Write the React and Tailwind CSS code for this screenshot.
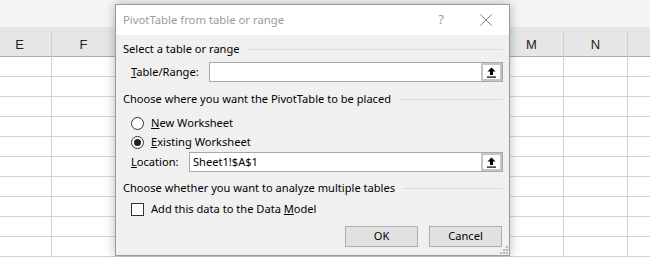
import React from "react";

const cols = ["E", "F", "", "", "", "", "", "", "M", "N", ""];

function UpBtn() {
  return (
    <div className="w-[21px] h-[18px] border-2 border-[#c4c4c4] bg-white flex items-center justify-center shrink-0">
      <svg width="9" height="11" viewBox="0 0 9 11">
        <path d="M4.5 0.5 L8.5 4.5 L6 4.5 L6 8 L3 8 L3 4.5 L0.5 4.5 Z" fill="#000" />
        <rect x="0" y="9.5" width="9" height="1.2" fill="#000" />
      </svg>
    </div>
  );
}

function Heading({ children }) {
  return (
    <div className="flex items-center h-[16px] gap-[8px]">
      <span className="whitespace-nowrap">{children}</span>
      <div className="flex-1 h-px bg-[#dcdcdc]" />
    </div>
  );
}

function Radio({ checked }) {
  return (
    <div className="w-[13px] h-[13px] rounded-full border border-[#333] bg-white flex items-center justify-center shrink-0">
      {checked && <div className="w-[7px] h-[7px] rounded-full bg-[#222]" />}
    </div>
  );
}

export default function App() {
  return (
    <div
      className="relative w-[650px] h-[257px] overflow-hidden bg-white"
      style={{ fontFamily: '"Noto Sans", "Open Sans", sans-serif' }}
    >
      {/* spreadsheet */}
      <div className="h-[27px] bg-[#f5f5f5]" />
      <div className="flex ml-[-12px] h-[30px] bg-[#e6e6e6] border-b border-[#ababab]">
        {cols.map((c, i) => (
          <div
            key={i}
            className="w-[64px] shrink-0 border-r border-[#cfcfcf] flex items-center justify-center text-[13px] text-[#222] mt-[5px] h-[25px]"
            style={{ fontFamily: '"Liberation Sans", Arial, sans-serif' }}
          >
            {c}
          </div>
        ))}
      </div>
      {Array.from({ length: 10 }).map((_, r) => (
        <div key={r} className="flex ml-[-12px] h-[20px] border-b border-[#d4d4d4]">
          {cols.map((c, i) => (
            <div key={i} className="w-[64px] shrink-0 border-r border-[#d4d4d4]" />
          ))}
        </div>
      ))}

      {/* dialog */}
      <div className="absolute left-[115px] top-[4px] w-[395px] h-[252px] border border-[#9a9a9a] bg-[#f0f0f0] shadow-[0_0_10px_rgba(0,0,0,0.28)] text-[11.1px] text-black flex flex-col">
        <div className="h-[30px] bg-white flex items-center pl-[7px] shrink-0">
          <span className="text-[#9b9b9b] text-[11.3px] flex-1">PivotTable from table or range</span>
          <span className="text-[#9a9a9a] text-[13px] mr-[36px]">?</span>
          <svg width="12" height="12" viewBox="0 0 12 12" className="mr-[17px]">
            <path d="M0.5 0.5 L11.5 11.5 M11.5 0.5 L0.5 11.5" stroke="#808080" strokeWidth="1" />
          </svg>
        </div>

        <div className="flex flex-col pl-[7px] pr-[6px]">
          <div className="mt-[6px]">
            <Heading>Select a table or range</Heading>
          </div>
          <div className="mt-[5px] flex items-center h-[20px]">
            <span className="ml-[8px] w-[78px]">
              <span className="underline">T</span>able/Range:
            </span>
            <div className="flex-1 h-[20px] bg-white border border-[#a8a8a8] flex items-center justify-end">
              <UpBtn />
            </div>
          </div>

          <div className="mt-[9px]">
            <Heading>Choose where you want the PivotTable to be placed</Heading>
          </div>
          <div className="mt-[8px] flex items-center h-[16px] ml-[8px] gap-[7px]">
            <Radio />
            <span>
              <span className="underline">N</span>ew Worksheet
            </span>
          </div>
          <div className="mt-[3px] flex items-center h-[16px] ml-[8px] gap-[7px]">
            <Radio checked />
            <span>
              <span className="underline">E</span>xisting Worksheet
            </span>
          </div>
          <div className="mt-[2px] flex items-center h-[20px]">
            <span className="ml-[8px] w-[58px]">
              <span className="underline">L</span>ocation:
            </span>
            <div className="flex-1 h-[20px] bg-white border border-[#a8a8a8] flex items-center">
              <span className="flex-1 pl-[3px]">Sheet1!$A$1</span>
              <UpBtn />
            </div>
          </div>

          <div className="mt-[8px]">
            <Heading>Choose whether you want to analyze multiple tables</Heading>
          </div>
          <div className="mt-[5px] flex items-center h-[16px] ml-[8px] gap-[7px]">
            <div className="w-[13px] h-[13px] border border-[#333] bg-white shrink-0" />
            <span>
              Add this data to the Data <span className="underline">M</span>odel
            </span>
          </div>

          <div className="mt-[9px] flex justify-end gap-[11px] pr-[1px]">
            <div className="w-[73px] h-[21px] bg-[#e1e1e1] border border-[#adadad] flex items-center justify-center">
              OK
            </div>
            <div className="w-[73px] h-[21px] bg-[#e1e1e1] border border-[#adadad] flex items-center justify-center">
              Cancel
            </div>
          </div>
        </div>

        {/* resize grip */}
        <svg width="8" height="8" viewBox="0 0 8 8" className="absolute right-[1px] bottom-[1px]">
          <rect x="6" y="0" width="2" height="2" fill="#b5b5b5" />
          <rect x="3" y="3" width="2" height="2" fill="#b5b5b5" />
          <rect x="6" y="3" width="2" height="2" fill="#b5b5b5" />
          <rect x="0" y="6" width="2" height="2" fill="#b5b5b5" />
          <rect x="3" y="6" width="2" height="2" fill="#b5b5b5" />
          <rect x="6" y="6" width="2" height="2" fill="#b5b5b5" />
        </svg>
      </div>
    </div>
  );
}
